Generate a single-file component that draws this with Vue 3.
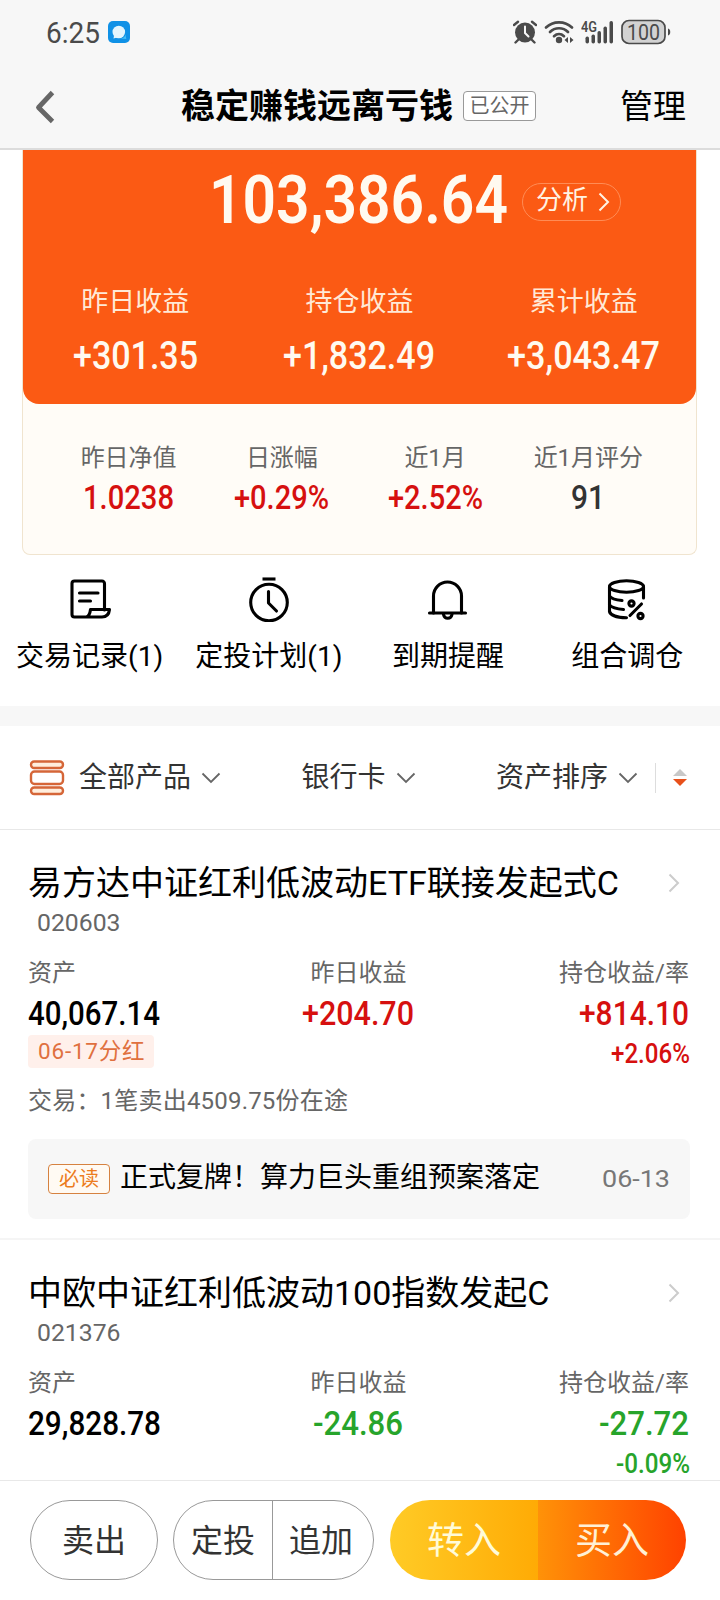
<template>
  <div class="page">
    <!-- 状态栏 -->
    <div class="status-bar">
      <Num text="6:25" :width="54" :size="29.500" :weight="400" />
      <svg class="msg-icon" width="22" height="22" viewBox="0 0 22 22">
        <rect width="22" height="22" rx="5" fill="#1091e6" />
        <path d="M6 14.500 5.500 17.500 9 16.500Z" fill="#e4f5fd" />
        <circle cx="10.800" cy="11" r="6.300" fill="#e4f5fd" />
        <path d="M12 17.500c3 0 5-1.500 5.500-4l.8 4.500z" fill="#45bdf5" />
      </svg>
      <div class="status-right">
        <svg width="24" height="24" viewBox="0 0 24 24" fill="none" stroke="#4a4a4a">
          <circle cx="12" cy="12.500" r="10" fill="#4a4a4a" stroke="none" />
          <path d="M1 5 5 1.800M23 5 19 1.800M5 20l-2.500 2.500M19 20l2.500 2.500" stroke-width="2.400" stroke-linecap="round" />
          <path d="M12 6.500v6.500l3.500 3.500" stroke="#f7f7f7" stroke-width="2" stroke-linecap="round" />
        </svg>
        <svg width="30" height="24" viewBox="0 0 30 24" fill="none" stroke="#4a4a4a">
          <path d="M2 7.500C9 .6 21 .6 28 7.500M6 12c5-5 13-5 18 0M10 16.200c3-2.800 7-2.800 10 0" stroke-width="2.700" stroke-linecap="round" />
          <circle cx="15" cy="20" r="3.200" fill="#4a4a4a" stroke="none" />
          <path d="M20.500 20l3.500-3v6zM29.500 20l-3.500-3v6z" fill="#4a4a4a" stroke="none" />
        </svg>
        <svg width="33" height="24" viewBox="0 0 33 24" fill="#4a4a4a">
          <text x="0" y="11.500" font-size="14.500" font-weight="600" font-family="Roboto, sans-serif" textLength="16" lengthAdjust="spacingAndGlyphs">4G</text>
          <rect x="4.500" y="16.500" width="3.500" height="7" rx="1.700" />
          <rect x="10.500" y="14.500" width="3.500" height="9" rx="1.700" />
          <rect x="16.500" y="11" width="3.500" height="12.500" rx="1.700" />
          <rect x="22.500" y="6.500" width="3.500" height="17" rx="1.700" />
          <rect x="28.500" y="1" width="3.500" height="22.500" rx="1.700" />
        </svg>
        <svg width="50" height="26" viewBox="0 0 50 26">
          <rect x="1" y="1.500" width="43" height="23" rx="7" fill="#d2d2d2" stroke="#4a4a4a" stroke-width="1.700" />
          <path d="M47 9.500c3 .5 3 6.500 0 7z" fill="#4a4a4a" />
          <text x="6" y="20.700" font-size="22" fill="#4a4a4a" font-family="Roboto, sans-serif" textLength="33" lengthAdjust="spacingAndGlyphs">100</text>
        </svg>
      </div>
    </div>

    <!-- 导航栏 -->
    <div class="nav-bar">
      <svg class="back" width="22" height="36" viewBox="0 0 22 36">
        <path d="M18.500 3.500 4.500 18.500l14 14" fill="none" stroke="#666" stroke-width="4.800" stroke-linecap="butt" stroke-linejoin="round" />
      </svg>
      <h1 class="nav-title">稳定赚钱远离亏钱</h1>
      <span class="open-tag">已公开</span>
      <span class="manage">管理</span>
    </div>

    <div class="content">
      <!-- 资产卡片 -->
      <div class="asset-card">
        <div class="asset-main">
          <div class="total">
            <Num text="103,386.64" :width="299" :size="67.500" :weight="600" />
            <span class="analyse">
              <span class="analyse-text">分析</span>
              <svg width="12" height="20" viewBox="0 0 12 20">
                <path d="m1.500 1.500 8.500 8.500-8.500 8.500" fill="none" stroke="#fff3e3" stroke-width="2" />
              </svg>
            </span>
          </div>
          <div class="profits">
            <div v-for="item in profits" :key="item.label" class="profit">
              <span>{{ item.label }}</span>
              <Num :text="item.value" :width="item.width" :size="38" :weight="550" />
            </div>
          </div>
        </div>
        <div class="stats">
          <div v-for="item in stats" :key="item.label" class="stat">
            <span>{{ item.label }}</span>
            <Num :class="item.color" :text="item.value" :width="item.width" :size="33.500" :weight="550" />
          </div>
        </div>
      </div>

      <!-- 快捷入口 -->
      <div class="entries">
        <div class="entry">
          <svg width="44" height="46" viewBox="0 0 44 46">
            <path d="M36.500 34V7.500a2.500 2.500 0 0 0-2.500-2.500H6.500A2.500 2.500 0 0 0 4 7.500v31A2.500 2.500 0 0 0 6.500 41H34c5 0 7-3 7.500-7.500H22.500c-.5 4-1 6.500-4 7.500" />
            <path d="M11.500 17h18.500M11.500 25h11" />
          </svg>
          <span>交易记录(1)</span>
        </div>
        <div class="entry">
          <svg width="44" height="46" viewBox="0 0 44 46">
            <circle cx="22" cy="26.500" r="18.300" />
            <path d="M15.500 3h13" stroke-linecap="butt" />
            <path d="M21.500 15.500V27l8 8" />
          </svg>
          <span>定投计划(1)</span>
        </div>
        <div class="entry">
          <svg width="44" height="46" viewBox="0 0 44 46">
            <path d="M7.500 37V20a14 14 0 0 1 28 0v17" />
            <path d="M3.500 37h36" />
            <path d="M17.500 38.500c1 5 7.500 5 8.500 0" />
          </svg>
          <span>到期提醒</span>
        </div>
        <div class="entry">
          <svg width="44" height="46" viewBox="0 0 44 46">
            <ellipse cx="21.500" cy="10.500" rx="17" ry="5.700" />
            <path d="M4.500 10.500v25c1 4 8 6 17 6.300M38.500 10.500V22M4.500 20c2 3 7 4 12.500 4.500M4.500 29c3 3.500 8 4 14 4.500" />
            <circle cx="26.500" cy="27.500" r="2.600" />
            <circle cx="35.500" cy="40" r="2.600" />
            <path d="M36.500 28 25 39.500" />
          </svg>
          <span>组合调仓</span>
        </div>
      </div>

      <!-- 筛选栏 -->
      <div class="filters">
        <svg class="list-icon" width="36" height="36" viewBox="0 0 36 36" fill="#ffeedd" stroke="#d56638" stroke-width="2.400">
          <rect x="2" y="1.500" width="32" height="6.500" rx="3.200" />
          <rect x="2" y="11.500" width="32" height="12.500" rx="3.500" fill="#fff" />
          <rect x="2" y="27.500" width="32" height="6.500" rx="3.200" />
        </svg>
        <div v-for="name in filters" :key="name" class="filter">
          {{ name }}
          <svg width="20" height="12" viewBox="0 0 20 12">
            <path d="m1.500 1.500 8.500 8.500 8.500-8.500" fill="none" stroke="#666" stroke-width="1.800" />
          </svg>
        </div>
        <svg class="sort-icon" width="14" height="18" viewBox="0 0 14 18">
          <path d="m0 7 7-7 7 7z" fill="#c8c8c8" />
          <path d="m0 10 7 7 7-7z" fill="#e8501a" />
        </svg>
      </div>

      <!-- 基金列表 -->
      <div v-for="fund in funds" :key="fund.code" class="fund">
        <div class="fund-title">
          <h2>{{ fund.name }}</h2>
          <svg width="12" height="20" viewBox="0 0 12 20">
            <path d="m1.500 1.500 8.500 8.500-8.500 8.500" fill="none" stroke="#ccc" stroke-width="2" />
          </svg>
        </div>
        <Num class="code" :text="fund.code" :width="83.500" :size="24.500" :weight="400" />
        <div class="cols">
          <div class="col">
            <span class="label">资产</span>
            <Num :text="fund.asset" :width="fund.assetWidth" :size="33" :weight="550" />
            <span v-if="fund.tag" class="bonus">{{ fund.tag }}</span>
          </div>
          <div class="col center">
            <span class="label">昨日收益</span>
            <Num :class="fund.color" :text="fund.day" :width="fund.dayWidth" :size="33" :weight="550" />
          </div>
          <div class="col right">
            <span class="label">持仓收益/率</span>
            <Num :class="fund.color" :text="fund.hold" :width="fund.holdWidth" :size="33" :weight="550" />
            <Num class="rate" :class="fund.color" :text="fund.rate" :width="fund.rateWidth" :size="27" :weight="550" />
          </div>
        </div>
        <p v-if="fund.trade" class="trade">{{ fund.trade }}</p>
        <div v-if="fund.news" class="news">
          <span class="must-read">必读</span>
          <span class="news-text">{{ fund.news }}</span>
          <Num class="news-date" text="06-13" :width="68" :size="24.500" :weight="400" />
        </div>
      </div>
    </div>

    <!-- 底部操作 -->
    <div class="bottom-bar">
      <button class="btn sell">卖出</button>
      <div class="btn-group">
        <button class="btn">定投</button>
        <button class="btn">追加</button>
      </div>
      <div class="trade-group">
        <button class="btn transfer">转入</button>
        <button class="btn buy">买入</button>
      </div>
    </div>
  </div>
</template>

<script setup>
import { h } from 'vue'

// 窄体数字：高度等于数字字高，宽度按给定值压缩
const Num = ({ text, width, size, weight = 500 }) => {
  const height = Math.round(size * 0.711)
  return h('svg', { class: 'num', width, height, viewBox: `0 0 ${width} ${height}` }, [
    h('text', {
      x: 0,
      y: height,
      fill: 'currentColor',
      'font-family': 'Roboto, sans-serif',
      'font-size': size,
      'font-weight': weight,
      textLength: width,
      lengthAdjust: 'spacingAndGlyphs'
    }, text)
  ])
}
Num.props = ['text', 'width', 'size', 'weight']

const profits = [
  { label: '昨日收益', value: '+301.35', width: 125 },
  { label: '持仓收益', value: '+1,832.49', width: 152 },
  { label: '累计收益', value: '+3,043.47', width: 153 }
]

const stats = [
  { label: '昨日净值', value: '1.0238', width: 91, color: 'red' },
  { label: '日涨幅', value: '+0.29%', width: 95, color: 'red' },
  { label: '近1月', value: '+2.52%', width: 95, color: 'red' },
  { label: '近1月评分', value: '91', width: 34, color: 'dark' }
]

const filters = ['全部产品', '银行卡', '资产排序']

const funds = [
  {
    name: '易方达中证红利低波动ETF联接发起式C',
    code: '020603',
    color: 'red',
    asset: '40,067.14',
    assetWidth: 132,
    day: '+204.70',
    dayWidth: 112,
    hold: '+814.10',
    holdWidth: 110,
    rate: '+2.06%',
    rateWidth: 79,
    tag: '06-17分红',
    trade: '交易：1笔卖出4509.75份在途',
    news: '正式复牌！算力巨头重组预案落定'
  },
  {
    name: '中欧中证红利低波动100指数发起C',
    code: '021376',
    color: 'green',
    asset: '29,828.78',
    assetWidth: 133,
    day: '-24.86',
    dayWidth: 90,
    hold: '-27.72',
    holdWidth: 90,
    rate: '-0.09%',
    rateWidth: 74
  }
]
</script>

<style>
body {
  background: #fff;
}
</style>

<style scoped>
.page {
  display: flex;
  flex-direction: column;
  width: 720px;
  height: 1600px;
  overflow: hidden;
  background: #fff;
  color: #000;
  font-family: Roboto, 'Noto Sans CJK SC', sans-serif;
}

.num {
  display: block;
  flex: none;
  overflow: visible;
}

.red {
  color: #d6100f;
}

.green {
  color: #27a42b;
}

.dark {
  color: #333;
}

/* 状态栏 */
.status-bar {
  display: flex;
  align-items: center;
  flex: none;
  height: 64px;
  padding: 0 49px 0 46px;
  box-sizing: border-box;
  background: #f7f7f7;
  color: #4a4a4a;
}

.msg-icon {
  margin-left: 8px;
}

.status-right {
  display: flex;
  align-items: center;
  gap: 7px;
  margin-left: auto;
}

/* 导航栏 */
.nav-bar {
  display: flex;
  align-items: center;
  flex: none;
  height: 86px;
  padding: 0 34px 0 34px;
  box-sizing: border-box;
  border-bottom: 2px solid #dcdcdc;
  background: #f7f7f7;
}

.nav-title {
  margin: 0 0 0 125px;
  font-size: 34px;
  line-height: 50px;
  font-weight: 700;
}

.open-tag {
  width: 71px;
  height: 28px;
  margin: -1px 0 0 10px;
  border: 1px solid #999;
  border-radius: 4px;
  background: #fff;
  color: #666;
  font-size: 20px;
  line-height: 29px;
  text-align: center;
}

.manage {
  margin-left: auto;
  font-size: 33px;
  line-height: 50px;
}

.back,
.manage {
  padding-top: 1px;
}

.content {
  flex: 1;
  min-height: 0;
  overflow: hidden;
}

/* 资产卡片 */
.asset-card {
  height: 405px;
  margin: 0 23px 0 22px;
  box-sizing: border-box;
  border: 1px solid #f0e4cf;
  border-top: none;
  border-radius: 0 0 8px 8px;
  background: #fffcf7;
}

.asset-main {
  height: 254px;
  padding-top: 24px;
  box-sizing: border-box;
  border-radius: 0 0 16px 16px;
  background: #fb5a14;
  color: #fffaf0;
}

.total {
  display: flex;
  align-items: center;
  height: 50px;
  padding-left: 186px;
}

.analyse {
  display: flex;
  align-items: center;
  gap: 10px;
  height: 36px;
  margin: 6px 0 0 14px;
  padding: 0 10px 0 13px;
  border: 1px solid #ff8c55;
  border-radius: 20px;
  font-size: 26px;
  line-height: 32px;
  color: #fff3e3;
}

.analyse-text {
  margin-bottom: 4px;
}

.profits {
  display: grid;
  grid-template-columns: repeat(3, 1fr);
  margin-top: 58px;
}

.profit {
  display: flex;
  flex-direction: column;
  align-items: center;
  font-size: 27px;
  line-height: 40px;
}

.profit span {
  color: #ffe9d6;
}

.profit .num {
  margin-top: 20px;
}

.stats {
  display: grid;
  grid-template-columns: repeat(4, 1fr);
  padding: 36px 31px 0 29px;
}

.stat {
  display: flex;
  flex-direction: column;
  align-items: center;
  font-size: 24px;
  line-height: 36px;
}

.stat span {
  color: #666;
}

.stat .num {
  margin-top: 9px;
}

/* 快捷入口 */
.entries {
  display: grid;
  grid-template-columns: repeat(4, 1fr);
  height: 151px;
  padding: 21px 3px 0 0;
  box-sizing: border-box;
}

.entry {
  display: flex;
  flex-direction: column;
  align-items: center;
  font-size: 28px;
  line-height: 40px;
}

.entry svg {
  fill: none;
  stroke: #000;
  stroke-width: 3.1;
  stroke-linecap: round;
  stroke-linejoin: round;
}

.entry span {
  margin-top: 15px;
}

/* 筛选栏 */
.filters {
  display: flex;
  align-items: center;
  height: 124px;
  padding: 0 33px 0 29px;
  box-sizing: border-box;
  border-top: 20px solid #f7f7f7;
  border-bottom: 1px solid #e8e8e8;
}

.filter {
  display: flex;
  align-items: center;
  gap: 10px;
  color: #333;
  font-size: 28px;
  line-height: 40px;
}

.list-icon {
  margin-right: 14px;
}

.filter + .filter {
  margin-left: auto;
}

.sort-icon {
  padding: 6px 0 6px 17px;
  margin-left: 17px;
  border-left: 1px solid #ddd;
}

/* 基金列表 */
.fund {
  height: 410px;
  padding: 28px 30px 0 28px;
  box-sizing: border-box;
  border-bottom: 2px solid #f5f5f5;
}

.fund-title {
  display: flex;
  align-items: center;
  justify-content: space-between;
  padding-right: 10px;
}

.fund-title h2 {
  margin: 0;
  font-size: 34px;
  line-height: 50px;
  font-weight: 400;
}

.code {
  margin: 6px 0 0 9px;
  color: #666;
}

.cols {
  display: grid;
  grid-template-columns: repeat(3, 1fr);
  height: 118px;
  margin: 24px 1px 0 0;
}

.col {
  display: flex;
  flex-direction: column;
  align-items: flex-start;
}

.col.center {
  align-items: center;
}

.col.right {
  align-items: flex-end;
}

.label {
  margin-bottom: 11px;
  color: #666;
  font-size: 24px;
  line-height: 36px;
}

.rate {
  margin: 19px -1px 0 0;
}

.bonus {
  margin-top: 10px;
  padding: 0 9px 0 10px;
  border-radius: 4px;
  background: #fff0eb;
  color: #e0703f;
  font-size: 22.5px;
  letter-spacing: 0.8px;
  line-height: 33px;
}

.trade {
  margin: 10px 0 0;
  color: #666;
  font-size: 24px;
  letter-spacing: 0.2px;
  line-height: 36px;
}

.news {
  display: flex;
  align-items: center;
  height: 80px;
  margin-top: 20px;
  padding: 0 20px;
  border-radius: 8px;
  background: #f7f7f7;
}

.must-read {
  width: 60px;
  height: 28px;
  margin-top: -1px;
  border: 1px solid #d68240;
  border-radius: 4px;
  background: #fffaf3;
  color: #ec7c20;
  font-size: 20px;
  line-height: 28px;
  text-align: center;
}

.news-text {
  margin: -2px 0 0 10px;
  font-size: 28px;
  line-height: 40px;
}

.news-date {
  margin: -2px 0 0 auto;
  color: #777;
}

/* 底部操作 */
.bottom-bar {
  display: flex;
  flex: none;
  height: 120px;
  padding: 19px 34px 0 30px;
  box-sizing: border-box;
  border-top: 1px solid #e8e8e8;
  background: #fff;
}

.btn {
  flex: 1;
  padding: 0 0 5px;
  border: none;
  background: none;
  color: #333;
  font-family: inherit;
  font-size: 32px;
}

.sell {
  flex: none;
  width: 128px;
  height: 80px;
  border: 1px solid #999;
  border-radius: 40px;
}

.btn-group {
  display: flex;
  width: 201px;
  height: 80px;
  margin-left: 15px;
  box-sizing: border-box;
  border: 1px solid #999;
  border-radius: 40px;
}

.btn-group .btn {
  flex: none;
  width: 98px;
}

.btn-group .btn + .btn {
  width: 101px;
  padding-right: 4px;
  border-left: 1px solid #999;
}

.trade-group {
  display: flex;
  width: 296px;
  height: 80px;
  margin-left: 16px;
  border-radius: 40px;
  overflow: hidden;
}

.trade-group .btn {
  padding-bottom: 5px;
  font-size: 37px;
}

.transfer {
  background: linear-gradient(90deg, #ffcb26, #ffab05);
  color: #fffbd8;
}

.buy {
  background: linear-gradient(90deg, #ff9208, #ff4200);
  color: #fff0d5;
}
</style>
